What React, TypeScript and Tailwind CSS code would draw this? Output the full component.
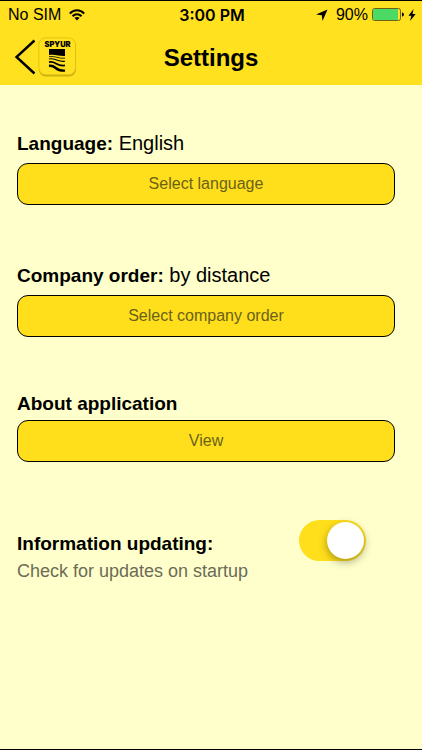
import { useState } from "react";

function Wifi() {
  return (
    <svg className="h-3 w-4" viewBox="0 0 16 12" aria-label="Wi-Fi" fill="none" stroke="#000" strokeWidth="2">
      <path d="M0.8 4.6C4.8 0.2 11.2 0.2 15.2 4.6" />
      <path d="M3.5 7.2C6 4.6 10 4.6 12.5 7.2" />
      <path d="M8 11.4L5.4 8.8C6.8 7.6 9.2 7.6 10.6 8.8Z" fill="#000" stroke="none" />
    </svg>
  );
}

function StatusBar() {
  return (
    <div className="grid h-7 grid-cols-[1fr_auto_1fr] items-center border-t border-black pr-1.5 pl-2 text-[16px] leading-5">
      <div className="flex items-center gap-2">
        <span>No SIM</span>
        <Wifi />
      </div>
      <span className="font-[Inter] font-semibold">3:00 PM</span>
      <div className="flex items-center justify-end">
        <svg className="mr-2 h-3 w-3" viewBox="0 0 12 12" aria-label="Location">
          <path d="M11.5 0.5L0 5.4L5.8 6.3L6.5 12Z" fill="#000" />
        </svg>
        <span className="mr-1">90%</span>
        <svg className="mr-1 h-[13px] w-8" viewBox="0 0 32 13" aria-label="Battery">
          <rect x="0.5" y="0.5" width="28" height="12" rx="2" fill="none" stroke="#6b6410" />
          <rect x="1" y="1" width="25" height="11" rx="1" fill="#4cd964" />
          <path d="M30 4.5C32.6 5 32.6 8 30 8.5Z" fill="#000" />
        </svg>
        <svg className="h-3 w-2" viewBox="0 0 8 12" aria-label="Charging">
          <path d="M5.6 0L0.4 6.7H3.4L2 12L7.7 4.9H4.5Z" fill="#000" />
        </svg>
      </div>
    </div>
  );
}

function Logo() {
  return (
    <svg className="h-10 w-10" viewBox="0 0 40 40" aria-hidden="true">
      <rect x="2" y="2" width="37" height="37.5" rx="7" fill="#a98f06" opacity="0.6" />
      <rect x="1.8" y="0.8" width="36.8" height="37" rx="7" fill="#ffe11f" stroke="#dcbe10" strokeWidth="0.8" />
      <text
        x="20.5"
        y="9.6"
        textAnchor="middle"
        fontFamily="Inter, sans-serif"
        fontWeight="900"
        fontSize="7.5"
        fill="#000"
      >
        SPYUR
      </text>
      <path d="M12 12H28V19C23 19.6 19 17 12 18Z" fill="#000" />
      <g fill="none" stroke="#000">
        <path d="M12 19.6C18 18.6 22 22 28 21.2" strokeWidth="0.8" />
        <path d="M12 22C18 20.4 21 25.4 28 24.2" strokeWidth="1.1" />
        <path d="M12 25.2C18.5 23.2 19 29.8 28 28.4" strokeWidth="1.8" />
        <path d="M12 29C19 27.2 17.5 34.6 28 33.6" strokeWidth="2.4" />
      </g>
    </svg>
  );
}

function Header() {
  return (
    <header className="bg-[#ffe11f]">
      <StatusBar />
      <div className="grid h-[57px] grid-cols-[1fr_auto_1fr] items-center px-3.5">
        <button type="button" aria-label="Back" className="flex items-center justify-self-start">
          <svg className="h-9 w-[23px]" viewBox="0 0 23 36" aria-hidden="true">
            <path d="M20.5 1.5L2.5 18L20.5 34.5" fill="none" stroke="#000" strokeWidth="2.4" />
          </svg>
          <Logo />
        </button>
        <h1 className="pt-0.5 text-[24px] leading-8 font-bold">Settings</h1>
      </div>
    </header>
  );
}

function Setting({ label, value, action }: { label: string; value?: string; action: string }) {
  return (
    <section className={value ? "space-y-2" : "-mt-[3px] space-y-1"}>
      <h2 className="h-6 text-[19px] leading-6 font-bold">
        {label}
        {value && <span className="text-[20px] font-normal"> {value}</span>}
      </h2>
      <button
        type="button"
        className="h-[42px] w-full rounded-[11px] border border-black bg-[#ffdf1b] text-[16px] text-[#6b6119]"
      >
        {action}
      </button>
    </section>
  );
}

export default function App() {
  const [updates, setUpdates] = useState(true);
  return (
    <div className="flex min-h-screen flex-col border-b border-black bg-[#ffffcb] font-['Liberation_Sans',Arial,sans-serif] text-black">
      <Header />
      <main className="flex flex-1 flex-col gap-[58px] pt-[46px] pr-[27px] pb-8 pl-[17px]">
        <Setting label="Language:" value="English" action="Select language" />
        <Setting label="Company order:" value="by distance" action="Select company order" />
        <Setting label="About application" action="View" />
        <label className="flex items-start justify-between pr-[29px]">
          <span className="pt-3">
            <span className="block text-[19px] leading-6 font-bold">Information updating:</span>
            <span className="block pt-[3px] text-[18px] leading-6 text-[#6b6b57]">Check for updates on startup</span>
          </span>
          <input
            type="checkbox"
            role="switch"
            checked={updates}
            onChange={(e) => setUpdates(e.target.checked)}
            className="flex h-[41px] w-[67px] shrink-0 appearance-none items-center rounded-full bg-[#d8d8b0] px-0.5 before:h-[37px] before:w-[37px] before:rounded-full before:bg-white before:shadow-[0_3px_8px_rgba(0,0,0,0.35)] checked:justify-end checked:bg-[#ffdf1b]"
          />
        </label>
      </main>
    </div>
  );
}
